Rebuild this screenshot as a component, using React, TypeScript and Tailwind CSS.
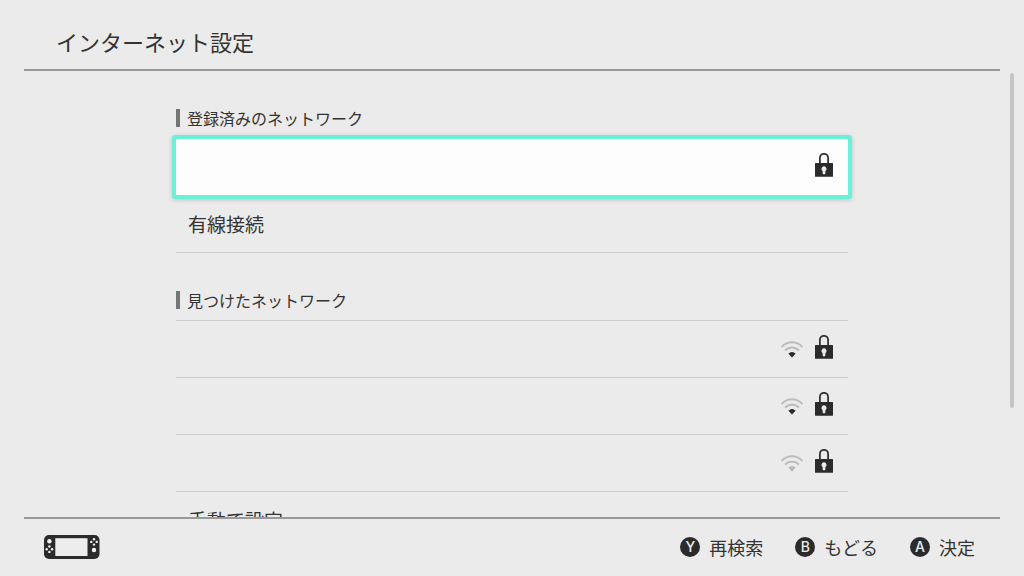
import type { ReactNode } from "react";

type Network = {
  id: string;
  name?: string;
  locked?: boolean;
  signal?: "weak" | "none";
  selected?: boolean;
};

const registered: Network[] = [
  { id: "saved-1", locked: true, selected: true },
  { id: "wired", name: "有線接続" },
];

const found: Network[] = [
  { id: "found-1", locked: true, signal: "weak" },
  { id: "found-2", locked: true, signal: "weak" },
  { id: "found-3", locked: true, signal: "none" },
  { id: "manual", name: "手動で設定" },
];

const actions = [
  { key: "Y", label: "再検索" },
  { key: "B", label: "もどる" },
  { key: "A", label: "決定" },
];

function LockIcon() {
  return (
    <svg width="18" height="24" viewBox="0 0 18 24" aria-hidden="true">
      <path
        d="M4.9 11V4.9a4.1 4.1 0 0 1 8.2 0V11"
        fill="none"
        stroke="#333333"
        strokeWidth="1.8"
      />
      <rect x="0" y="10" width="18" height="13.7" rx="0.5" fill="#2b2b2b" />
      <path
        d="M9 13.3a2.6 2.6 0 0 1 1.4 4.75V20a1.4 1.4 0 0 1-2.8 0v-1.95A2.6 2.6 0 0 1 9 13.3Z"
        fill="#ebebeb"
      />
    </svg>
  );
}

function WifiIcon({ signal }: { signal: "weak" | "none" }) {
  return (
    <svg width="22" height="18" viewBox="0 0 22 18" aria-hidden="true">
      <path
        d="M0.6 6Q5 1.3 11 1.3T21.4 6M4 9.4Q7.2 6.4 11 6.4T18 9.4"
        fill="none"
        stroke="#bdbdbd"
        strokeWidth="2"
      />
      <path
        d="M11 16.4 7.4 12.8Q8.8 11.1 11 11.1T14.6 12.8Z"
        fill={signal === "weak" ? "#2b2b2b" : "#b8b8b8"}
      />
    </svg>
  );
}

function ConsoleIcon() {
  return (
    <svg width="56" height="24" viewBox="0 0 56 24" aria-hidden="true">
      <rect width="55.5" height="24" rx="5" fill="#2b2b2b" />
      <rect x="11.3" y="3.2" width="32.2" height="17.8" fill="#ededed" />
      <g fill="#f2f2f2">
        <circle cx="5.4" cy="6.3" r="2.2" />
        <circle cx="5.4" cy="11.5" r="1.2" />
        <circle cx="5.4" cy="16.9" r="1.2" />
        <circle cx="2.7" cy="14.2" r="1.2" />
        <circle cx="8.1" cy="14.2" r="1.2" />
        <circle cx="50" cy="4.2" r="1.2" />
        <circle cx="50" cy="9.6" r="1.2" />
        <circle cx="47.3" cy="6.9" r="1.2" />
        <circle cx="52.7" cy="6.9" r="1.2" />
        <circle cx="50" cy="15" r="2.2" />
      </g>
    </svg>
  );
}

function NetworkRow({ network }: { network: Network }) {
  return (
    <li className="border-b border-[#cbcbcb]">
      <button
        type="button"
        aria-label={network.name ?? "ネットワーク"}
        className={
          network.selected
            ? "relative flex h-14 w-full items-center justify-between rounded-[1px] bg-[#fdfdfd] pr-[15px] pl-3 shadow-[0_1px_4px_4px_rgba(0,0,0,0.18)] ring-4 ring-[#6cf1d8]"
            : "flex h-14 w-full items-center justify-between pr-[15px] pl-3"
        }
      >
        <span className="text-[19px] leading-7">{network.name}</span>
        <span className="flex items-end gap-3 pb-1">
          {network.signal && <WifiIcon signal={network.signal} />}
          {network.locked && <LockIcon />}
        </span>
      </button>
    </li>
  );
}

function Section({ title, children }: { title: string; children: ReactNode }) {
  return (
    <section>
      <h2 className="mb-[11px] border-l-4 border-[#757575] pl-[7px] text-base leading-[18px]">
        {title}
      </h2>
      <ul className="border-t border-[#cbcbcb]">{children}</ul>
    </section>
  );
}

export default function App() {
  return (
    <div className="flex h-screen flex-col bg-[#ebebeb] font-['Noto_Sans_CJK_JP',sans-serif] text-[#333333]">
      <header className="mx-6 border-b-2 border-[#999999] px-8 pt-[23px] pb-2.5">
        <h1 className="text-[22px] leading-9">インターネット設定</h1>
      </header>

      <main className="relative min-h-0 flex-1 overflow-hidden">
        <div className="mx-auto flex max-w-2xl flex-col gap-[38px] pt-[38px]">
          <Section title="登録済みのネットワーク">
            {registered.map((network) => (
              <NetworkRow key={network.id} network={network} />
            ))}
          </Section>
          <Section title="見つけたネットワーク">
            {found.map((network) => (
              <NetworkRow key={network.id} network={network} />
            ))}
          </Section>
        </div>
        <div className="absolute top-0.5 right-2.5 h-3/4 w-1 rounded-full bg-[#c6c6c6]" />
      </main>

      <footer className="mx-6 flex h-[59px] items-center justify-between border-t-2 border-[#999999] pr-[25px] pb-0.5 pl-5">
        <ConsoleIcon />
        <div className="flex gap-8">
          {actions.map((action) => (
            <button
              key={action.key}
              type="button"
              className="flex items-center gap-[9px] text-lg"
            >
              <span className="flex size-5 items-center justify-center rounded-full bg-[#2b2b2b] font-['Inter',sans-serif] text-sm font-medium text-[#ebebeb]">
                {action.key}
              </span>
              {action.label}
            </button>
          ))}
        </div>
      </footer>
    </div>
  );
}
